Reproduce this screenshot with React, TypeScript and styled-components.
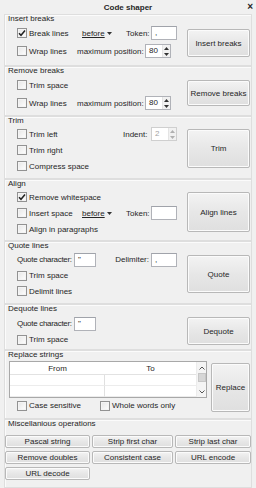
import React from 'react';
import styled, { createGlobalStyle } from 'styled-components';

const Global = createGlobalStyle`
  html, body { margin: 0; padding: 0; background: #f0f0f0; }
  body {
    font-family: "Liberation Sans", Arial, sans-serif;
    font-size: 8px;
    color: #262626;
    width: 256px;
    height: 488px;
    overflow: hidden;
  }
  * { box-sizing: border-box; }
`;

const Panel = styled.div`
  width: 256px;
  height: 488px;
  display: flex;
  flex-direction: column;
  background: #f0f0f0;
`;

const TitleBar = styled.div`
  height: 14px;
  display: grid;
  grid-template-columns: 1fr auto 1fr;
  align-items: center;
  font-weight: bold;
`;

const TitleText = styled.div`
  grid-column: 2;
`;

const Close = styled.div`
  grid-column: 3;
  justify-self: end;
  margin-right: 3px;
  font-size: 10px;
  font-weight: bold;
  line-height: 10px;
`;

const Section = styled.section<{ $h: number }>`
  margin: 0 4px 0 4px;
  height: ${(p) => p.$h}px;
  border: 1px solid #dedede;
  box-shadow: inset 1px 1px 0 #fbfbfb;
  display: flex;
  flex-direction: column;
`;

const Header = styled.div`
  height: 10px;
  line-height: 10px;
  padding-left: 3px;
  margin-top: -1px;
  white-space: nowrap;
`;

const Body = styled.div`
  display: flex;
  flex: 1;
  align-items: flex-start;
  padding-right: 1px;
`;

const Left = styled.div<{ $pl?: number }>`
  flex: 1;
  display: flex;
  flex-direction: column;
  padding-left: ${(p) => (p.$pl ?? 12)}px;
`;

const Row = styled.div<{ $h: number; $pl?: number }>`
  height: ${(p) => p.$h}px;
  display: flex;
  align-items: center;
  padding-left: ${(p) => p.$pl ?? 0}px;
  white-space: nowrap;
`;

const Button = styled.button<{ $h: number; $mt: number; $w?: number }>`
  width: ${(p) => p.$w ?? 63}px;
  height: ${(p) => p.$h}px;
  margin-top: ${(p) => p.$mt}px;
  font-family: inherit;
  font-size: 8px;
  color: #262626;
  border: 1px solid #b8b8b8;
  border-radius: 2px;
  background: linear-gradient(#f3f3f3, #e7e7e7 50%, #dfdfdf);
  box-shadow: inset 0 0 0 1px #fbfbfb;
  padding: 0;
  flex: none;
`;

const CheckWrap = styled.label<{ $w: number }>`
  width: ${(p) => p.$w}px;
  display: flex;
  align-items: center;
  gap: 2px;
  flex: none;
`;

const Box = styled.span`
  width: 10px;
  height: 10px;
  border: 1px solid #929292;
  background: linear-gradient(135deg, #e6e6e6, #ffffff);
  box-shadow: inset 0 0 0 1px #f4f4f4;
  display: flex;
  align-items: center;
  justify-content: center;
  flex: none;
`;

const FieldLabel = styled.span<{ $w: number; $right?: boolean; $tight?: boolean }>`
  width: ${(p) => p.$w}px;
  text-align: ${(p) => (p.$right ? 'right' : 'left')};
  letter-spacing: ${(p) => (p.$tight ? '-0.3px' : 'normal')};
  flex: none;
`;

const TextBox = styled.div<{ $w: number; $ml?: number }>`
  width: ${(p) => p.$w}px;
  height: 14px;
  margin-left: ${(p) => p.$ml ?? 2}px;
  background: #fff;
  border: 1px solid #b0b2b8;
  border-top-color: #a0a3aa;
  padding-left: 3px;
  line-height: 12px;
  flex: none;
`;

const Spin = styled.div<{ $disabled?: boolean }>`
  width: 26px;
  height: 14px;
  margin-left: 2px;
  background: #fff;
  border: 1px solid ${(p) => (p.$disabled ? '#cfcfcf' : '#b0b2b8')};
  display: flex;
  flex: none;
  color: ${(p) => (p.$disabled ? '#a3a3a3' : '#262626')};
`;

const SpinText = styled.span`
  flex: 1;
  padding-left: 3px;
  line-height: 12px;
`;

const SpinArrows = styled.div`
  width: 8px;
  display: flex;
  flex-direction: column;
  border-left: 1px solid #e4e4e4;
  background: #f1f1f1;
`;

const ArrowCell = styled.div`
  flex: 1;
  display: flex;
  align-items: center;
  justify-content: center;
`;

const Drop = styled.span<{ $w: number }>`
  width: ${(p) => p.$w}px;
  display: flex;
  align-items: center;
  gap: 2px;
  flex: none;
`;

const Under = styled.span`
  text-decoration: underline;
`;

const Table = styled.div`
  width: 198px;
  height: 37px;
  margin-top: 1px;
  background: #fff;
  border: 1px solid #a8a8a8;
  display: grid;
  grid-template-columns: 95px 1fr 10px;
  grid-template-rows: 13px 11px 1fr;
`;

const HeadCell = styled.div`
  display: flex;
  align-items: center;
  justify-content: center;
  border-bottom: 1px solid #e2e2e2;
`;

const Cell = styled.div<{ $div?: boolean }>`
  border-right: ${(p) => (p.$div ? '1px solid #e0e0e0' : 'none')};
  border-bottom: 1px solid #ececec;
`;

const ScrollBar = styled.div`
  grid-column: 3;
  grid-row: 1 / span 3;
  display: flex;
  flex-direction: column;
  align-items: center;
  background: #f4f4f4;
  border-left: 1px solid #ececec;
`;

const ScrollArrow = styled.div`
  height: 11px;
  display: flex;
  align-items: center;
  justify-content: center;
`;

const Thumb = styled.div`
  width: 8px;
  height: 9px;
  background: #d6d6d6;
  border: 1px solid #c6c6c6;
`;

const Track = styled.div`
  flex: 1;
  display: flex;
  align-items: flex-start;
`;

const MiscGrid = styled.div`
  display: grid;
  grid-template-columns: 85px 81px 76px;
  grid-auto-rows: 13px;
  column-gap: 2px;
  row-gap: 3px;
  margin-top: 6px;
`;

const MiscButton = styled.button`
  font-family: inherit;
  font-size: 8px;
  color: #262626;
  border: 1px solid #b8b8b8;
  border-radius: 2px;
  background: linear-gradient(#f3f3f3, #e7e7e7 50%, #dfdfdf);
  box-shadow: inset 0 0 0 1px #fbfbfb;
  padding: 0;
`;

const Tick = () => (
  <svg width="8" height="8" viewBox="0 0 8 8">
    <path d="M1 4.2 L3 6.3 L7 1.5" fill="none" stroke="#222" strokeWidth="1.5" />
  </svg>
);

const Check = ({ w, label, checked }: { w: number; label: string; checked?: boolean }) => (
  <CheckWrap $w={w}>
    <Box>{checked ? <Tick /> : null}</Box>
    <span>{label}</span>
  </CheckWrap>
);

const Tri = ({ up, color = '#333' }: { up?: boolean; color?: string }) => (
  <svg width="5" height="3" viewBox="0 0 5 3">
    <path d={up ? 'M0 3 L2.5 0 L5 3 Z' : 'M0 0 L5 0 L2.5 3 Z'} fill={color} />
  </svg>
);

const Spinner = ({ value, disabled }: { value: string; disabled?: boolean }) => (
  <Spin $disabled={disabled}>
    <SpinText>{value}</SpinText>
    <SpinArrows>
      <ArrowCell>
        <Tri up color={disabled ? '#b0b0b0' : '#333'} />
      </ArrowCell>
      <ArrowCell>
        <Tri color={disabled ? '#b0b0b0' : '#333'} />
      </ArrowCell>
    </SpinArrows>
  </Spin>
);

const Dropdown = ({ w }: { w: number }) => (
  <Drop $w={w}>
    <Under>before</Under>
    <Tri />
  </Drop>
);

const Chevron = ({ up }: { up?: boolean }) => (
  <svg width="6" height="4" viewBox="0 0 6 4">
    <path d={up ? 'M0.5 3.5 L3 1 L5.5 3.5' : 'M0.5 0.5 L3 3 L5.5 0.5'} fill="none" stroke="#555" strokeWidth="1" />
  </svg>
);

export default function App() {
  return (
    <>
      <Global />
      <Panel>
        <TitleBar>
          <TitleText>Code shaper</TitleText>
          <Close>×</Close>
        </TitleBar>

        <Section $h={52}>
          <Header>Insert breaks</Header>
          <Body>
            <Left>
              <Row $h={18}>
                <Check w={65} label="Break lines" checked />
                <Dropdown w={44} />
                <FieldLabel $w={23} $right>Token:</FieldLabel>
                <TextBox $w={26}>,</TextBox>
              </Row>
              <Row $h={18}>
                <Check w={60} label="Wrap lines" />
                <FieldLabel $w={66}>maximum position:</FieldLabel>
                <Spinner value="80" />
              </Row>
            </Left>
            <Button $h={28} $mt={5}>Insert breaks</Button>
          </Body>
        </Section>

        <Section $h={50}>
          <Header>Remove breaks</Header>
          <Body>
            <Left>
              <Row $h={18}>
                <Check w={65} label="Trim space" />
              </Row>
              <Row $h={18}>
                <Check w={60} label="Wrap lines" />
                <FieldLabel $w={66}>maximum position:</FieldLabel>
                <Spinner value="80" />
              </Row>
            </Left>
            <Button $h={26} $mt={4}>Remove breaks</Button>
          </Body>
        </Section>

        <Section $h={63}>
          <Header>Trim</Header>
          <Body>
            <Left>
              <Row $h={16}>
                <Check w={106} label="Trim left" />
                <FieldLabel $w={26}>Indent:</FieldLabel>
                <Spinner value="2" disabled />
              </Row>
              <Row $h={16}>
                <Check w={80} label="Trim right" />
              </Row>
              <Row $h={16}>
                <Check w={100} label="Compress space" />
              </Row>
            </Left>
            <Button $h={39} $mt={3}>Trim</Button>
          </Body>
        </Section>

        <Section $h={62}>
          <Header>Align</Header>
          <Body>
            <Left>
              <Row $h={16}>
                <Check w={100} label="Remove whitespace" checked />
              </Row>
              <Row $h={16}>
                <Check w={65} label="Insert space" />
                <Dropdown w={44} />
                <FieldLabel $w={23} $right>Token:</FieldLabel>
                <TextBox $w={26} />
              </Row>
              <Row $h={16}>
                <Check w={100} label="Align in paragraphs" />
              </Row>
            </Left>
            <Button $h={40} $mt={3}>Align lines</Button>
          </Body>
        </Section>

        <Section $h={63}>
          <Header>Quote lines</Header>
          <Body>
            <Left>
              <Row $h={17}>
                <FieldLabel $w={55} $tight>Quote character:</FieldLabel>
                <TextBox $w={22}>"</TextBox>
                <FieldLabel $w={53} $right>Delimiter:</FieldLabel>
                <TextBox $w={26}>,</TextBox>
              </Row>
              <Row $h={15}>
                <Check w={80} label="Trim space" />
              </Row>
              <Row $h={16}>
                <Check w={80} label="Delimit lines" />
              </Row>
            </Left>
            <Button $h={38} $mt={4}>Quote</Button>
          </Body>
        </Section>

        <Section $h={46}>
          <Header>Dequote lines</Header>
          <Body>
            <Left>
              <Row $h={19}>
                <FieldLabel $w={55} $tight>Quote character:</FieldLabel>
                <TextBox $w={22}>"</TextBox>
              </Row>
              <Row $h={13}>
                <Check w={80} label="Trim space" />
              </Row>
            </Left>
            <Button $h={28} $mt={3}>Dequote</Button>
          </Body>
        </Section>

        <Section $h={69}>
          <Header>Replace strings</Header>
          <Body>
            <Left $pl={4}>
              <Table>
                <HeadCell>From</HeadCell>
                <HeadCell>To</HeadCell>
                <ScrollBar>
                  <ScrollArrow>
                    <Chevron up />
                  </ScrollArrow>
                  <Track>
                    <Thumb />
                  </Track>
                  <ScrollArrow>
                    <Chevron />
                  </ScrollArrow>
                </ScrollBar>
                <Cell $div />
                <Cell />
                <Cell $div />
                <Cell />
              </Table>
              <Row $h={15} $pl={8}>
                <Check w={83} label="Case sensitive" />
                <Check w={90} label="Whole words only" />
              </Row>
            </Left>
            <Button $h={49} $mt={3} $w={39}>Replace</Button>
          </Body>
        </Section>

        <Section $h={69}>
          <Header>Miscellanious operations</Header>
          <MiscGrid>
            <MiscButton>Pascal string</MiscButton>
            <MiscButton>Strip first char</MiscButton>
            <MiscButton>Strip last char</MiscButton>
            <MiscButton>Remove doubles</MiscButton>
            <MiscButton>Consistent case</MiscButton>
            <MiscButton>URL encode</MiscButton>
            <MiscButton>URL decode</MiscButton>
          </MiscGrid>
        </Section>
      </Panel>
    </>
  );
}
